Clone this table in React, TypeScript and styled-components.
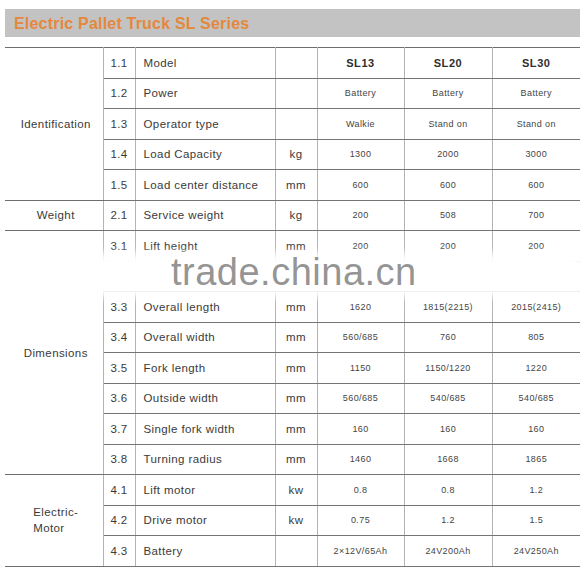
import React from 'react';
import styled, { createGlobalStyle } from 'styled-components';

const GlobalStyle = createGlobalStyle`
  body {
    margin: 0;
    background: #fff;
    font-family: "Liberation Sans", Arial, sans-serif;
  }
`;

const Page = styled.div`
  width: 575px;
  padding: 9px 5px 0 5px;
`;

const TitleBar = styled.div`
  height: 28px;
  line-height: 29px;
  background: #c3c3c3;
  padding-left: 9px;
  color: #e4883d;
  font-size: 16px;
  font-weight: bold;
  letter-spacing: 0.2px;
`;

const TableWrap = styled.div`
  position: relative;
  margin-top: 10px;
`;

const SpecTable = styled.table`
  width: 575px;
  border-collapse: collapse;
  table-layout: fixed;
  border-top: 1.5px solid #6e6e6e;
  color: #3a3a3a;
`;

const Row = styled.tr`
  height: 30.5px;
`;

const Cell = styled.td<{ $align?: 'left' | 'center'; $last?: boolean }>`
  padding: 0 0 0 ${({ $align }) => ($align === 'left' ? '8px' : '0')};
  text-align: ${({ $align }) => $align ?? 'center'};
  vertical-align: middle;
  border-bottom: 1px solid #747474;
  border-right: ${({ $last }) => ($last ? 'none' : '1px solid #b4b4b4')};
  font-size: 11.5px;
  letter-spacing: 0.4px;
  white-space: nowrap;
`;

const GroupCell = styled(Cell)`
  border-bottom: 1px solid #6e6e6e;
`;

const GroupLabel = styled.span`
  display: inline-block;
  text-align: left;
  line-height: 16px;
  margin-left: 4px;
`;

const Value = styled(Cell)<{ $bold?: boolean }>`
  font-size: ${({ $bold }) => ($bold ? '11px' : '9px')};
  font-weight: ${({ $bold }) => ($bold ? 'bold' : 'normal')};
  letter-spacing: ${({ $bold }) => ($bold ? '0.6px' : '0.4px')};
  color: ${({ $bold }) => ($bold ? '#2e2e2e' : '#444')};
`;

const Watermark = styled.div`
  position: absolute;
  left: 90px;
  top: 206px;
  width: 490px;
  height: 44px;
  pointer-events: none;
`;

const Band = styled.div`
  position: absolute;
  inset: 0;
  background: #fff;
  filter: blur(4px);
`;

const MarkText = styled.div`
  position: absolute;
  left: 76px;
  top: 0;
  font-size: 38px;
  line-height: 38px;
  color: rgba(120, 120, 120, 0.8);
  letter-spacing: 0.5px;
`;

type Spec = { no: string; name: string; unit: string; values: string[]; bold?: boolean };
type Group = { label: React.ReactNode; rows: Spec[] };

const groups: Group[] = [
  {
    label: 'Identification',
    rows: [
      { no: '1.1', name: 'Model', unit: '', values: ['SL13', 'SL20', 'SL30'], bold: true },
      { no: '1.2', name: 'Power', unit: '', values: ['Battery', 'Battery', 'Battery'] },
      { no: '1.3', name: 'Operator type', unit: '', values: ['Walkie', 'Stand on', 'Stand on'] },
      { no: '1.4', name: 'Load Capacity', unit: 'kg', values: ['1300', '2000', '3000'] },
      { no: '1.5', name: 'Load center distance', unit: 'mm', values: ['600', '600', '600'] },
    ],
  },
  {
    label: 'Weight',
    rows: [{ no: '2.1', name: 'Service weight', unit: 'kg', values: ['200', '508', '700'] }],
  },
  {
    label: 'Dimensions',
    rows: [
      { no: '3.1', name: 'Lift height', unit: 'mm', values: ['200', '200', '200'] },
      { no: '', name: '', unit: '', values: ['', '', ''] },
      { no: '3.3', name: 'Overall length', unit: 'mm', values: ['1620', '1815(2215)', '2015(2415)'] },
      { no: '3.4', name: 'Overall width', unit: 'mm', values: ['560/685', '760', '805'] },
      { no: '3.5', name: 'Fork length', unit: 'mm', values: ['1150', '1150/1220', '1220'] },
      { no: '3.6', name: 'Outside width', unit: 'mm', values: ['560/685', '540/685', '540/685'] },
      { no: '3.7', name: 'Single fork width', unit: 'mm', values: ['160', '160', '160'] },
      { no: '3.8', name: 'Turning radius', unit: 'mm', values: ['1460', '1668', '1865'] },
    ],
  },
  {
    label: (
      <>
        Electric-
        <br />
        Motor
      </>
    ),
    rows: [
      { no: '4.1', name: 'Lift motor', unit: 'kw', values: ['0.8', '0.8', '1.2'] },
      { no: '4.2', name: 'Drive motor', unit: 'kw', values: ['0.75', '1.2', '1.5'] },
      { no: '4.3', name: 'Battery', unit: '', values: ['2×12V/65Ah', '24V200Ah', '24V250Ah'] },
    ],
  },
];

export default function App() {
  return (
    <Page>
      <GlobalStyle />
      <TitleBar>Electric Pallet Truck SL Series</TitleBar>
      <TableWrap>
        <SpecTable>
          <colgroup>
            <col style={{ width: 98 }} />
            <col style={{ width: 32 }} />
            <col style={{ width: 140 }} />
            <col style={{ width: 42 }} />
            <col style={{ width: 87 }} />
            <col style={{ width: 88 }} />
            <col style={{ width: 88 }} />
          </colgroup>
          <tbody>
            {groups.map((g, gi) =>
              g.rows.map((r, ri) => (
                <Row key={`${gi}-${ri}`}>
                  {ri === 0 && (
                    <GroupCell rowSpan={g.rows.length}>
                      <GroupLabel>{g.label}</GroupLabel>
                    </GroupCell>
                  )}
                  <Cell>{r.no}</Cell>
                  <Cell $align="left">{r.name}</Cell>
                  <Cell>{r.unit}</Cell>
                  {r.values.map((v, vi) => (
                    <Value key={vi} $bold={r.bold} $last={vi === 2}>
                      {v}
                    </Value>
                  ))}
                </Row>
              ))
            )}
          </tbody>
        </SpecTable>
        <Watermark>
          <Band />
          <MarkText>trade.china.cn</MarkText>
        </Watermark>
      </TableWrap>
    </Page>
  );
}
